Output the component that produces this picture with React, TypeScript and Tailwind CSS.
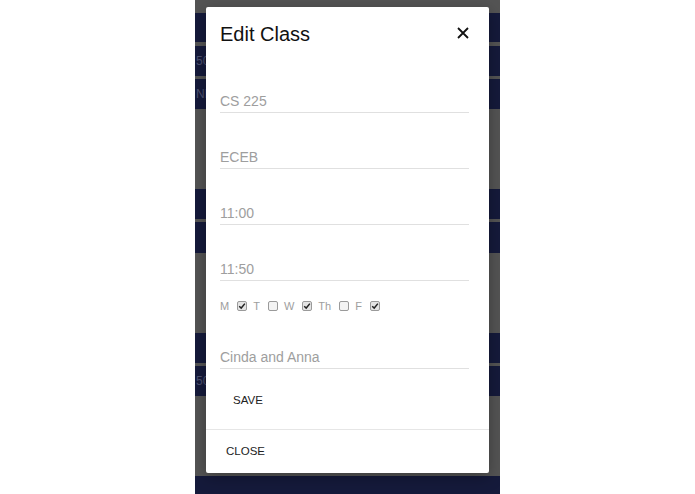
import React from 'react';

const Bar = ({ h, text, mt }: { h: string; text?: string; mt: string }) => (
  <div className={`${h} ${mt} shrink-0 bg-[#151a3b] flex items-center overflow-hidden`}>
    {text && <span className="pl-[1px] text-[12px] text-[#4d5170] whitespace-nowrap">{text}</span>}
  </div>
);

const Check = ({ checked }: { checked: boolean }) => (
  <span
    className={`inline-flex h-[10px] w-[10px] items-center justify-center rounded-[2px] border border-[#9a9a9a] ${
      checked ? 'bg-[#e4e4e4]' : 'bg-[#f3f3f3]'
    }`}
  >
    {checked && (
      <svg viewBox="0 0 10 10" className="h-[8px] w-[8px]">
        <path d="M1.5 5.2 L4 7.6 L8.6 2" fill="none" stroke="#222" strokeWidth="1.8" />
      </svg>
    )}
  </span>
);

const Field = ({ value, className }: { value: string; className: string }) => (
  <div className={`${className} pb-[1px] border-b border-[#e0e0e0] text-[14px] leading-[20px] text-[#9e9e9e]`}>{value}</div>
);

const days: [string, boolean][] = [
  ['M', true],
  ['T', false],
  ['W', true],
  ['Th', false],
  ['F', true],
];

export default function App() {
  return (
    <div className="w-[695px] h-[494px] bg-white flex justify-center overflow-hidden" style={{ fontFamily: '"Liberation Sans", Arial, sans-serif' }}>
      <div className="relative w-[305px] h-[494px] bg-[#545454] flex flex-col pt-[13px] overflow-hidden">
        <Bar h="h-[29px]" mt="mt-0" />
        <Bar h="h-[30px]" mt="mt-[4px]" text="50 ECEB" />
        <Bar h="h-[30px]" mt="mt-[3px]" text="NE" />
        <Bar h="h-[30px]" mt="mt-[80px]" />
        <Bar h="h-[31px]" mt="mt-[3px]" />
        <Bar h="h-[30px]" mt="mt-[80px]" />
        <Bar h="h-[30px]" mt="mt-[3px]" text="50 ECEB" />
        <Bar h="h-[30px]" mt="mt-[80px]" />

        <div className="absolute left-[11px] top-[7px] w-[283px] h-[466px] bg-white rounded-[2px] shadow-[0_4px_16px_rgba(0,0,0,0.3)] flex flex-col">
          <div className="flex items-start justify-between pl-[14px] pr-[20px] pt-[15px]">
            <h2 className="text-[20px] leading-[24px] text-[#111]">Edit Class</h2>
            <svg viewBox="0 0 12 12" className="mt-[5px] h-[12px] w-[12px]">
              <path d="M1 1 L11 11 M11 1 L1 11" stroke="#111" strokeWidth="1.8" />
            </svg>
          </div>
          <div className="pl-[14px] pr-[20px]">
            <Field value="CS 225" className="mt-[45px]" />
            <Field value="ECEB" className="mt-[34px]" />
            <Field value="11:00" className="mt-[34px]" />
            <Field value="11:50" className="mt-[34px]" />
            <div className="mt-[15px] flex h-[20px] items-center text-[11px] text-[#9e9e9e]">
              {days.map(([d, c]) => (
                <span key={d} className="flex items-center">
                  <span>{d}</span>
                  <span className="ml-[8px] mr-[6px] flex">
                    <Check checked={c} />
                  </span>
                </span>
              ))}
            </div>
            <Field value="Cinda and Anna" className="mt-[31px]" />
          </div>
          <div className="pl-[27px] mt-[23px] text-[11.5px] leading-[16px] text-[#222]">SAVE</div>
          <div className="mt-[21px] border-t border-[#e6e6e6]" />
          <div className="pl-[20px] mt-[13px] text-[11.5px] leading-[16px] text-[#222]">CLOSE</div>
        </div>
      </div>
    </div>
  );
}
